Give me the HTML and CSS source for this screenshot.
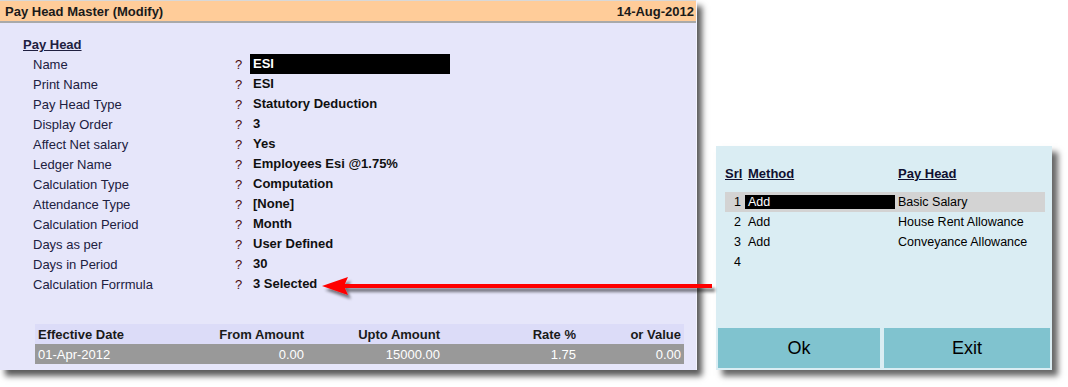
FILE: index.html
```html
<!DOCTYPE html>
<html lang="en">
<head>
<meta charset="UTF-8" />
<title>Pay Head Master (Modify)</title>
<link rel="stylesheet" href="styles.css">
</head>
<body>
<div class="stage">

  <!-- main form -->
  <div class="window">
    <div class="titlebar">
      <span>Pay Head Master (Modify)</span>
      <span>14-Aug-2012</span>
    </div>

    <div class="form">
      <div class="section-title">Pay Head</div>
      <div class="field"><span class="label">Name</span><span class="q">?</span><span class="value active">ESI</span></div>
      <div class="field"><span class="label">Print Name</span><span class="q">?</span><span class="value">ESI</span></div>
      <div class="field"><span class="label">Pay Head Type</span><span class="q">?</span><span class="value">Statutory Deduction</span></div>
      <div class="field"><span class="label">Display Order</span><span class="q">?</span><span class="value">3</span></div>
      <div class="field"><span class="label">Affect Net salary</span><span class="q">?</span><span class="value">Yes</span></div>
      <div class="field"><span class="label">Ledger Name</span><span class="q">?</span><span class="value">Employees Esi @1.75%</span></div>
      <div class="field"><span class="label">Calculation Type</span><span class="q">?</span><span class="value">Computation</span></div>
      <div class="field"><span class="label">Attendance Type</span><span class="q">?</span><span class="value">[None]</span></div>
      <div class="field"><span class="label">Calculation Period</span><span class="q">?</span><span class="value">Month</span></div>
      <div class="field"><span class="label">Days as per</span><span class="q">?</span><span class="value">User Defined</span></div>
      <div class="field"><span class="label">Days in Period</span><span class="q">?</span><span class="value">30</span></div>
      <div class="field"><span class="label">Calculation Forrmula</span><span class="q">?</span><span class="value">3 Selected</span></div>
    </div>

    <div class="rates">
      <div class="rates-row head">
        <span>Effective Date</span>
        <span class="num">From Amount</span>
        <span class="num">Upto Amount</span>
        <span class="num">Rate %</span>
        <span class="num">or Value</span>
      </div>
      <div class="rates-row data">
        <span>01-Apr-2012</span>
        <span class="num">0.00</span>
        <span class="num">15000.00</span>
        <span class="num">1.75</span>
        <span class="num">0.00</span>
      </div>
    </div>
  </div>

  <!-- formula popup -->
  <div class="popup">
    <div class="popup-body">
      <div class="line head">
        <span class="srl"><u>Srl</u></span>
        <span class="method"><u>Method</u></span>
        <span class="payhead"><u>Pay Head</u></span>
      </div>
      <div class="line current">
        <span class="srl">1</span>
        <span class="method">Add</span>
        <span class="payhead">Basic Salary</span>
      </div>
      <div class="line">
        <span class="srl">2</span>
        <span class="method">Add</span>
        <span class="payhead">House Rent Allowance</span>
      </div>
      <div class="line">
        <span class="srl">3</span>
        <span class="method">Add</span>
        <span class="payhead">Conveyance Allowance</span>
      </div>
      <div class="line">
        <span class="srl">4</span>
        <span class="method"></span>
        <span class="payhead"></span>
      </div>
    </div>
    <div class="buttons">
      <button>Ok</button>
      <button>Exit</button>
    </div>
  </div>

  <!-- pointer arrow -->
  <svg class="arrow" width="400" height="30" viewBox="0 0 400 30">
    <defs>
      <filter id="drop" x="-5%" y="-50%" width="110%" height="200%">
        <feGaussianBlur in="SourceAlpha" stdDeviation="1.5" />
        <feOffset dx="3" dy="4" />
        <feComponentTransfer><feFuncA type="linear" slope="0.5" /></feComponentTransfer>
        <feMerge><feMergeNode /><feMergeNode in="SourceGraphic" /></feMerge>
      </filter>
    </defs>
    <g filter="url(#drop)">
      <rect x="22" y="9" width="370" height="4" fill="#ff0000" />
      <path d="M2 11 L28 2 L24 11 L28 20 Z" fill="#ff0000" />
    </g>
  </svg>

</div>
</body>
</html>
```

FILE: styles.css
```css
/* 共通 */
* {
  box-sizing: border-box;
}
body {
  margin: 0;
  background: #ffffff;
  font-family: 'Liberation Sans', Arial, sans-serif;
  font-size: 13px;
  color: #000;
}
.stage {
  position: relative;
  width: 1068px;
  height: 387px;
}

/* メイン画面 */
.window {
  width: 697px;
  height: 370px;
  background: #e6e6fa;
  border-right: 1px solid #f4f4ff;
  box-shadow: 5px 6px 6px rgba(0, 0, 0, 0.65);
  display: flex;
  flex-direction: column;
}
.titlebar {
  height: 23px;
  display: flex;
  justify-content: space-between;
  align-items: center;
  padding: 0 2px 0 5px;
  background: #ffcc99;
  border-top: 1px solid #d8d8d8;
  border-bottom: 2px solid #a9a9a9;
  font-weight: bold;
  font-size: 13px;
  color: #1a1a1a;
}
.form {
  padding: 14px 0 0 23px;
}
.section-title {
  height: 17px;
  font-weight: bold;
  text-decoration: underline;
  color: #202040;
}
.field {
  display: grid;
  grid-template-columns: 202px 18px 197px;
  height: 20px;
  align-items: center;
  padding-left: 10px;
}
.label {
  color: #202040;
}
.q {
  color: #4a0a0a;
}
.value {
  font-weight: bold;
  color: #101010;
  height: 20px;
  line-height: 20px;
  white-space: nowrap;
}
.value.active {
  background: #000;
  color: #fff;
  margin-left: -3px;
  padding-left: 3px;
}

/* 税率表 */
.rates {
  margin: auto 12px 6px 35px;
}
.rates-row {
  display: grid;
  grid-template-columns: 146px 120px 136px 136px 105px;
  height: 20px;
  align-items: center;
  padding: 0 4px 0 3px;
}
.rates-row .num {
  text-align: right;
}
.rates-row.head {
  background: #dcdcf8;
  font-weight: bold;
  color: #1a1a1a;
}
.rates-row.data {
  background: #999999;
  color: #ffffff;
}

/* 計算式ポップアップ */
.popup {
  position: absolute;
  left: 716px;
  top: 146px;
  width: 336px;
  height: 224px;
  background: #daedf3;
  box-shadow: 6px 6px 6px rgba(0, 0, 0, 0.6);
  display: flex;
  flex-direction: column;
  font-size: 12.5px;
}
.popup-body {
  flex: 1;
  padding: 17px 7px 0 9px;
}
.line {
  display: grid;
  grid-template-columns: 20px 150px 150px;
  height: 20px;
  align-items: center;
}
.line.head {
  font-weight: bold;
  font-size: 13px;
  color: #101030;
  margin-bottom: 9px;
}
.line .srl {
  text-align: right;
  padding-right: 4px;
}
.line.head .srl {
  text-align: left;
}
.line .method {
  padding-left: 3px;
}
.line .payhead {
  padding-left: 3px;
}
.line.current {
  background: #d3d3d3;
}
.line.current .method {
  background: #000;
  color: #fff;
}
.buttons {
  display: grid;
  grid-template-columns: 162px 166px;
  gap: 4px;
  padding: 0 2px 2px 2px;
}
.buttons button {
  height: 40px;
  border: none;
  background: #80c3cf;
  font-family: 'Liberation Sans', Arial, sans-serif;
  font-size: 18px;
  color: #000;
}

/* 矢印 */
.arrow {
  position: absolute;
  left: 320px;
  top: 275px;
}
```
